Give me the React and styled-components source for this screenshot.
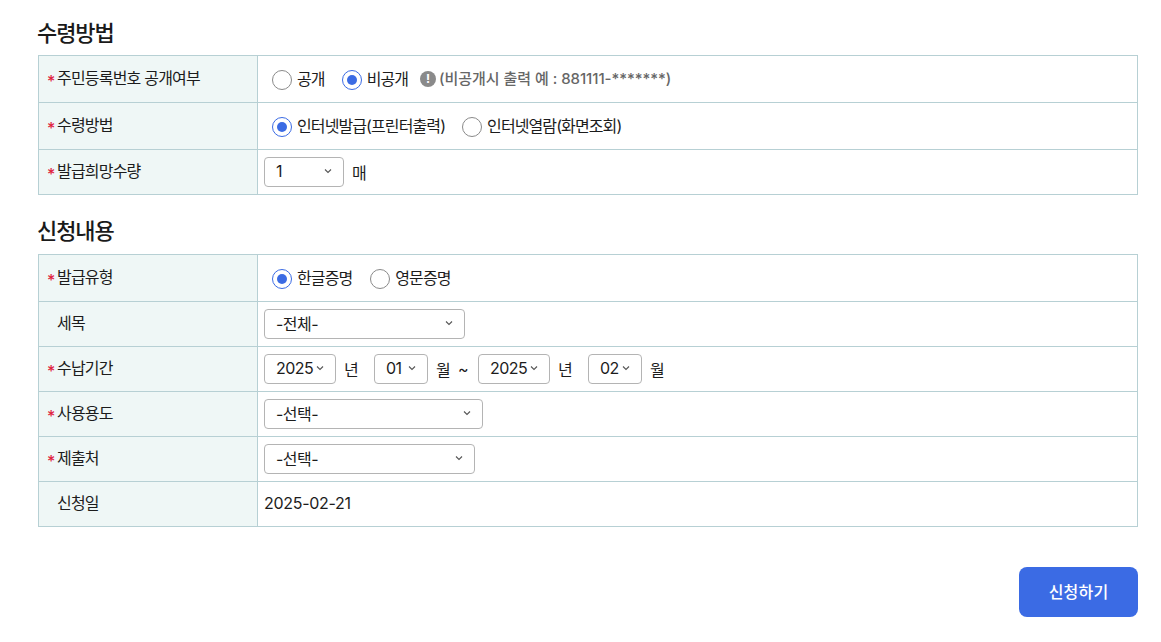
import React from "react";
import styled, { createGlobalStyle } from "styled-components";

const Global = createGlobalStyle`
  html, body { margin: 0; padding: 0; background: #fff; }
  body { font-family: Inter, "Noto Sans CJK KR", sans-serif; color: #1f1f1f; }
`;
const Page = styled.div`
  width: 1161px;
  height: 642px;
  box-sizing: border-box;
  padding: 17px 23px 0 38px;
  overflow: hidden;
`;
const Title = styled.h2`
  margin: 0 0 ${(p) => p.$after ?? 6}px -1px;
  height: 32px;
  font-size: 22px;
  line-height: 32px;
  font-weight: 500;
  letter-spacing: -1.1px;
  color: #1a1a1a;
`;
const Table = styled.table`
  width: 1100px;
  table-layout: fixed;
  border-collapse: collapse;
  margin-bottom: ${(p) => p.$after}px;
`;
const Row = styled.tr`
  height: ${(p) => p.$h}px;
`;
const Th = styled.th`
  width: 219px;
  box-sizing: border-box;
  padding: 0 0 5px 8px;
  background: #eff7f6;
  border: 1px solid #b7d0d4;
  text-align: left;
  font-size: 16px;
  font-weight: 400;
  letter-spacing: -0.8px;
  color: #1c1c1c;
  white-space: nowrap;
`;
const Star = styled.span`
  display: inline-block;
  width: 10px;
  color: #e0243f;
  font-size: 16px;
  font-weight: 500;
  letter-spacing: 0;
  position: relative;
  top: 3px;
`;
const Td = styled.td`
  box-sizing: border-box;
  padding: 0 6px;
  border: 1px solid #b7d0d4;
  font-size: 16px;
  font-weight: 400;
  letter-spacing: -0.9px;
  color: #1c1c1c;
`;
const Line = styled.div`
  display: flex;
  align-items: center;
  padding-left: ${(p) => p.$inset || 0}px;
  padding-top: ${(p) => (p.$inset ? 1 : 0)}px;
`;
const Radio = styled.span`
  box-sizing: border-box;
  width: 20px;
  height: 20px;
  flex: none;
  border-radius: 50%;
  border: 1px solid ${(p) => (p.$on ? "#3b6be4" : "#8a8a8a")};
  display: flex;
  align-items: center;
  justify-content: center;
  margin-right: 5px;
  &::after {
    content: "";
    width: 10px;
    height: 10px;
    border-radius: 50%;
    background: ${(p) => (p.$on ? "#3b6be4" : "transparent")};
  }
`;
const RadioLabel = styled.span`
  margin-right: ${(p) => p.$gap}px;
  position: relative;
  top: -2px;
`;
const InfoDot = styled.span`
  width: 16px;
  height: 16px;
  flex: none;
  border-radius: 50%;
  background: #8a8a8a;
  color: #fff;
  font-size: 12px;
  font-weight: 700;
  line-height: 16px;
  text-align: center;
  margin-right: 3px;
  letter-spacing: 0;
  position: relative;
  top: -1px;
`;
const Hint = styled.span`
  color: #666;
  font-size: 15px;
  font-weight: 500;
  letter-spacing: -0.05px;
  position: relative;
  top: -2px;
`;
const Select = styled.div`
  box-sizing: border-box;
  width: ${(p) => p.$w}px;
  height: 30px;
  flex: none;
  border: 1px solid #b4b4b4;
  border-radius: 4px;
  background: #fff;
  display: flex;
  align-items: center;
  justify-content: space-between;
  padding: 0 ${(p) => p.$pr ?? 11}px 2px ${(p) => p.$pl ?? 11}px;
  font-size: 16px;
  font-weight: 400;
  letter-spacing: -0.5px;
`;
const Chevron = () => (
  <svg width="8" height="6" viewBox="0 0 8 6" fill="none">
    <path d="M1 1.5 L4 4.5 L7 1.5" stroke="#555" strokeWidth="1.1" />
  </svg>
);
const Unit = styled.span`
  width: ${(p) => p.$w ?? 14}px;
  margin: 0 ${(p) => p.$r}px 0 ${(p) => p.$l}px;
  font-size: 16px;
  letter-spacing: 0;
  font-weight: 400;
  flex: none;
  white-space: nowrap;
`;
const PlainValue = styled.span`
  display: block;
  font-size: 16px;
  font-weight: 400;
  letter-spacing: -0.3px;
  padding-bottom: 2px;
`;
const Footer = styled.div`
  display: flex;
  justify-content: flex-end;
  margin-top: 40px;
`;
const Submit = styled.button`
  width: 119px;
  height: 50px;
  border: 0;
  border-radius: 8px;
  background: #3b6be4;
  color: #fff;
  padding: 0 0 2px;
  font: 500 16px Inter, "Noto Sans CJK KR", sans-serif;
  letter-spacing: 0.2px;
`;

const Req = () => <Star>*</Star>;
const Pick = ({ w, v, pl, pr }) => (
  <Select $w={w} $pl={pl} $pr={pr}>
    <span>{v}</span>
    <Chevron />
  </Select>
);

export default function App() {
  return (
    <Page>
      <Global />
      <Title>수령방법</Title>
      <Table $after={20}>
        <tbody>
          <Row $h={47}>
            <Th><Req />주민등록번호 공개여부</Th>
            <Td>
              <Line $inset={8}>
                <Radio /><RadioLabel $gap={17}>공개</RadioLabel>
                <Radio $on /><RadioLabel $gap={12}>비공개</RadioLabel>
                <InfoDot>!</InfoDot>
                <Hint>(비공개시 출력 예 : 881111-*******)</Hint>
              </Line>
            </Td>
          </Row>
          <Row $h={47}>
            <Th><Req />수령방법</Th>
            <Td>
              <Line $inset={8}>
                <Radio $on /><RadioLabel $gap={17}>인터넷발급(프린터출력)</RadioLabel>
                <Radio /><RadioLabel $gap={0}>인터넷열람(화면조회)</RadioLabel>
              </Line>
            </Td>
          </Row>
          <Row $h={45}>
            <Th><Req />발급희망수량</Th>
            <Td>
              <Line>
                <Pick w={80} v="1" />
                <Unit $l={8} $r={0}>매</Unit>
              </Line>
            </Td>
          </Row>
        </tbody>
      </Table>
      <Title $after={7}>신청내용</Title>
      <Table $after={21}>
        <tbody>
          <Row $h={47}>
            <Th><Req />발급유형</Th>
            <Td>
              <Line $inset={8}>
                <Radio $on /><RadioLabel $gap={18}>한글증명</RadioLabel>
                <Radio /><RadioLabel $gap={0}>영문증명</RadioLabel>
              </Line>
            </Td>
          </Row>
          <Row $h={45}>
            <Th><Star />세목</Th>
            <Td><Line><Pick w={201} v="-전체-" /></Line></Td>
          </Row>
          <Row $h={45}>
            <Th><Req />수납기간</Th>
            <Td>
              <Line>
                <Pick w={72} v="2025" pr={11} />
                <Unit $l={8} $r={16}>년</Unit>
                <Pick w={54} v="01" pr={11} />
                <Unit $l={8} $r={8}>월</Unit>
                <Unit $l={0} $r={10} $w={10}>~</Unit>
                <Pick w={72} v="2025" pr={11} />
                <Unit $l={8} $r={16}>년</Unit>
                <Pick w={54} v="02" pr={11} />
                <Unit $l={8} $r={0}>월</Unit>
              </Line>
            </Td>
          </Row>
          <Row $h={45}>
            <Th><Req />사용용도</Th>
            <Td><Line><Pick w={219} v="-선택-" /></Line></Td>
          </Row>
          <Row $h={45}>
            <Th><Req />제출처</Th>
            <Td><Line><Pick w={211} v="-선택-" /></Line></Td>
          </Row>
          <Row $h={45}>
            <Th><Star />신청일</Th>
            <Td><PlainValue>2025-02-21</PlainValue></Td>
          </Row>
        </tbody>
      </Table>
      <Footer><Submit>신청하기</Submit></Footer>
    </Page>
  );
}
